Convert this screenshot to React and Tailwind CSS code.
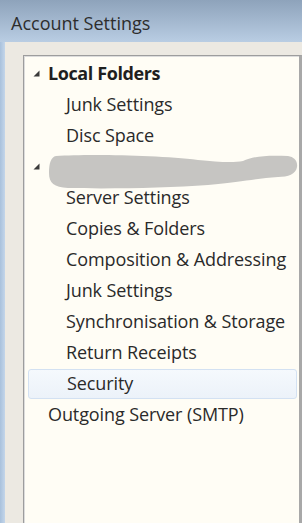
import React from "react";

function Tri() {
  return (
    <svg width="7" height="7" viewBox="0 0 7 7" className="shrink-0">
      <polygon points="6.5,0.5 6.5,6.5 0.5,6.5" fill="#3a3a3a" />
    </svg>
  );
}

const children1 = ["Junk Settings", "Disc Space"];
const children2 = [
  "Server Settings",
  "Copies & Folders",
  "Composition & Addressing",
  "Junk Settings",
  "Synchronisation & Storage",
  "Return Receipts",
];

function Child({ label }) {
  return (
    <div className="h-[31px] flex items-center pl-[42px]">{label}</div>
  );
}

export default function App() {
  return (
    <div
      className="w-[302px] h-[523px] overflow-hidden flex flex-col bg-[#ece9e2] text-[#2a2a2a]"
      style={{ fontFamily: '"Open Sans", "Noto Sans", sans-serif' }}
    >
      <div className="h-[42px] shrink-0 bg-gradient-to-b from-[#8ea3bb] to-[#b9cde3] flex items-center pl-[11px] pt-[4px] text-[18px] font-medium text-[#2d2d2d]">
        Account Settings
      </div>
      <div className="flex flex-1 min-h-0">
        <div className="w-[5px] bg-gradient-to-r from-[#a9c1dc] to-[#c4d6ea]" />
        <div className="flex-1 pl-[18px] pt-[13px] flex min-h-0">
          <div className="flex-1 border-l border-t border-[#9d9d9d] border-r-[3px] border-r-[#a8a8a8] bg-[#fffdf5] pt-[2px] text-[18px] font-medium tracking-[-0.1px] shadow-[inset_1px_1px_0_#dcdcdc]">
            <div className="h-[31px] flex items-center pl-[9px] gap-[8px] font-bold text-[#1f1f1f] tracking-[-0.4px]">
              <Tri />
              <span>Local Folders</span>
            </div>
            {children1.map((c, i) => (
              <Child key={i} label={c} />
            ))}
            <div className="h-[31px] flex items-center pl-[9px] relative">
              <Tri />
              <svg
                width="252"
                height="35"
                viewBox="0 0 252 35"
                className="absolute left-[24px] top-[4px]"
              >
                <path
                  d="M8 1 C40 -1 110 0 150 5 C170 7 185 8 195 6 C205 1 220 0 240 1 C246 2 250 6 249 12 C248 19 240 22 230 22 C210 23 195 27 160 30 C120 33 60 34 20 33 C6 32 1 28 1 18 C1 8 3 2 8 1 Z"
                  fill="#c6c5c2"
                />
              </svg>
            </div>
            {children2.map((c, i) => (
              <Child key={i} label={c} />
            ))}
            <div className="h-[31px] flex items-center pr-[2px] pl-[4px]">
              <div className="flex-1 h-[30px] flex items-center pl-[38px] rounded-[3px] border border-[#d3e1f2] bg-gradient-to-b from-[#f5f9fd] to-[#ecf2f9]">
                Security
              </div>
            </div>
            <div className="h-[31px] flex items-center pl-[24px]">
              Outgoing Server (SMTP)
            </div>
          </div>
        </div>
      </div>
    </div>
  );
}
